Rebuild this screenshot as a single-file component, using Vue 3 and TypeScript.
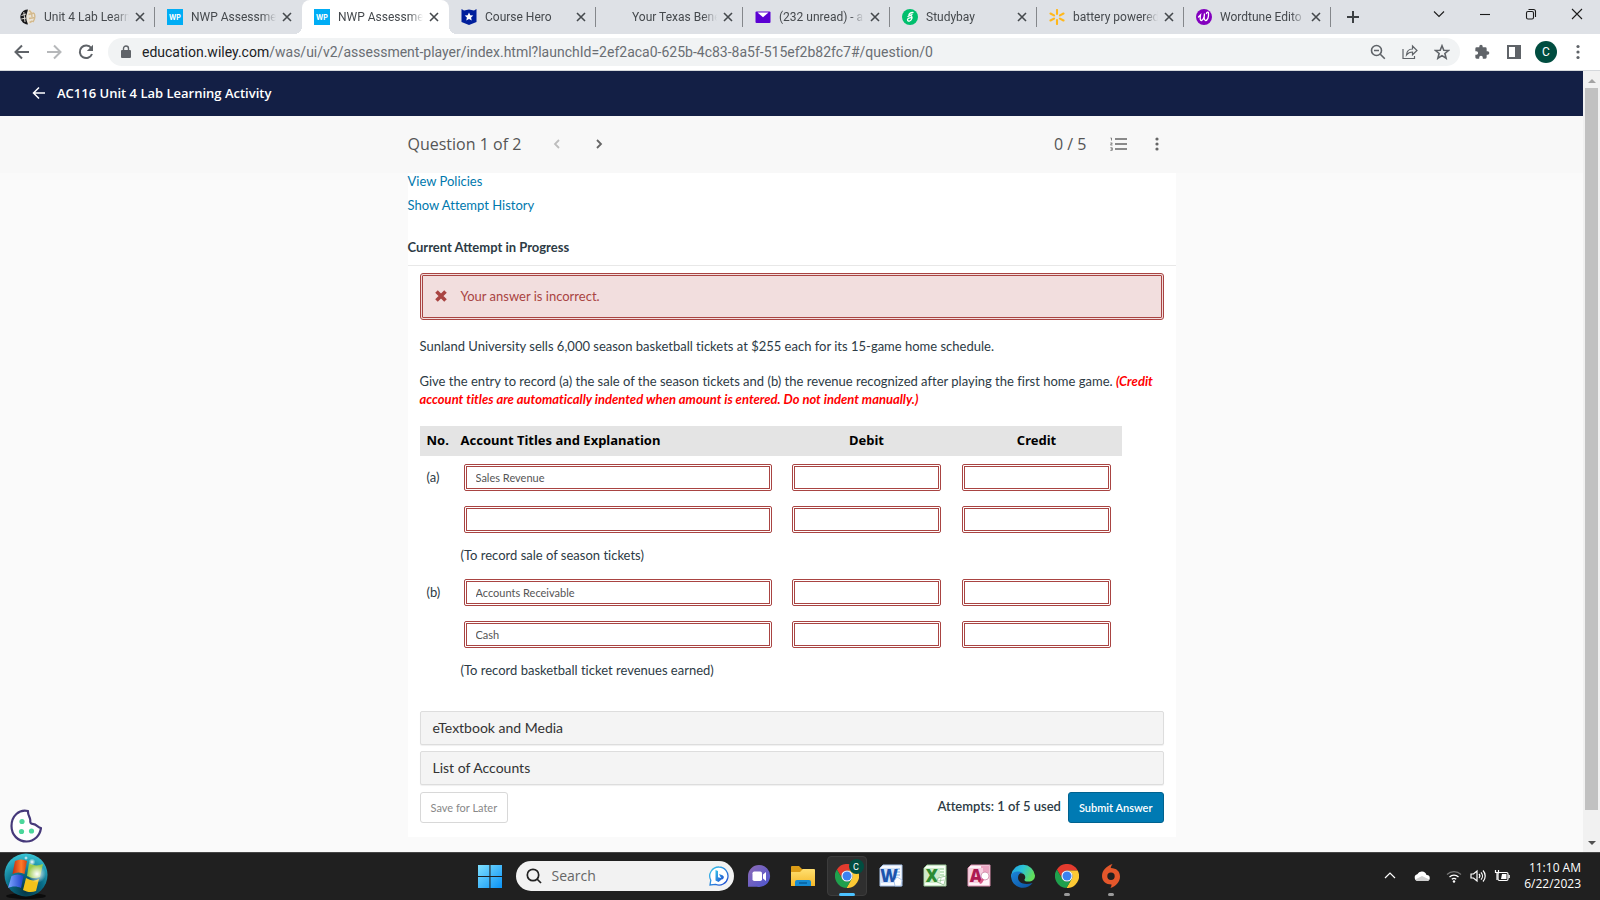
<script setup lang="ts">
import { reactive } from 'vue'

interface Tab {
  title: string
  icon: string
  active?: boolean
  divider?: boolean
}

interface EntryLine {
  id: string
  no?: string
  account?: string
  debit?: string
  credit?: string
  note?: string
}

const tabs: Tab[] = [
  { title: 'Unit 4 Lab Learn', icon: 'globe', divider: true },
  { title: 'NWP Assessme', icon: 'wp' },
  { title: 'NWP Assessme', icon: 'wp', active: true },
  { title: 'Course Hero', icon: 'hero', divider: true },
  { title: 'Your Texas Bene', icon: 'none', divider: true },
  { title: '(232 unread) - a', icon: 'mail', divider: true },
  { title: 'Studybay', icon: 'study', divider: true },
  { title: 'battery powered', icon: 'spark', divider: true },
  { title: 'Wordtune Edito', icon: 'tune', divider: true },
]

const lines = reactive<EntryLine[]>([
  { id: 'a1', no: '(a)', account: 'Sales Revenue', debit: '', credit: '' },
  { id: 'a2', account: '', debit: '', credit: '' },
  { id: 'an', note: '(To record sale of season tickets)' },
  { id: 'b1', no: '(b)', account: 'Accounts Receivable', debit: '', credit: '' },
  { id: 'b2', account: 'Cash', debit: '', credit: '' },
  { id: 'bn', note: '(To record basketball ticket revenues earned)' },
])
</script>

<template>
  <div class="desktop">
    <header class="browser">
      <div class="tabstrip">
        <div v-for="(tab, i) in tabs" :key="i" class="tab" :class="{ active: tab.active, divider: tab.divider }">
          <svg class="favicon" viewBox="0 0 16 16" aria-hidden="true">
            <g v-if="tab.icon === 'globe'">
              <circle cx="8" cy="8" r="7" fill="#ece5d8" />
              <path d="M8 .4A7.6 7.6 0 0 0 3 13.700L6 15.300 8 15.600 6.500 11 6.200 7z" fill="#17171a" />
              <path d="M1.500 6.500 6 5M1.200 10 6.500 9M3.800 3 5 13" stroke="#dedbd4" stroke-width="1" fill="none" />
              <path d="M9 1.500c2 1 3 4 3 6.500M8.500 5.500 14 4M9 9.500l6-1M9.500 13.500l3-1.500M14 4c1 2 1 6-1 9" stroke="#d3b98d" stroke-width="1.400" fill="none" />
            </g>
            <g v-else-if="tab.icon === 'wp'">
              <rect width="16" height="16" fill="#00adf5" />
              <text x="8" y="10.500" text-anchor="middle" class="wp">WP</text>
            </g>
            <g v-else-if="tab.icon === 'hero'">
              <path d="M.500 0 3 1.500 8 .5 13 1.500 15.500 0V13L8 16 .5 13z" fill="#001f9c" />
              <path d="m8 3.500 1.300 2.800 3 .3-2.200 2 .6 3L8 10.100l-2.700 1.500.6-3-2.200-2 3-.3z" fill="#fff" />
            </g>
            <g v-else-if="tab.icon === 'mail'">
              <rect x=".5" y="2.500" width="15" height="11.500" rx="1" fill="#5b00d3" />
              <path d="M2.500 3.500h11L8 8.300z" fill="#fff" />
            </g>
            <g v-else-if="tab.icon === 'study'">
              <circle cx="8" cy="8" r="8" fill="#00bf6d" />
              <path d="M11 3.500C8 3.500 6.500 5 7 6.700c2.500-.7 3.500.8 2.800 3-.7 2.600-4.200 3.300-4.300 1 0-1.500 2-2.200 4.500-2M6 7.500l4-2" fill="none" stroke="#fff" stroke-width="1.300" stroke-linecap="round" />
            </g>
            <g v-else-if="tab.icon === 'spark'" stroke="#ffb81c" stroke-width="2.100" stroke-linecap="round">
              <path d="M8 1v4M8 11v4M1.500 4.500 5 6.400M11 9.600l3.500 1.900M1.500 11.500 5 9.600M11 6.400l3.500-1.900" />
            </g>
            <g v-else-if="tab.icon === 'tune'">
              <circle cx="8" cy="8" r="8" fill="#8300bf" />
              <path d="M2.500 8 4.500 6C4 9 4 11.800 5.500 11.500 7.300 11.200 8.500 7.500 8.500 4.500 8 8 7.800 11.500 9.500 11.500c2.200 0 3.300-3.500 3-7.500-.2-1.500-2-1.200-2 .5" fill="none" stroke="#fff" stroke-width="1.300" stroke-linecap="round" />
            </g>
          </svg>
          <span class="tab-title">{{ tab.title }}</span>
          <button class="tab-close" aria-label="Close tab">
            <svg viewBox="0 0 10 10"><path d="m1 1 8 8M9 1 1 9" /></svg>
          </button>
        </div>
        <button class="new-tab" aria-label="New tab">
          <svg viewBox="0 0 12 12"><path d="M6 0v12M0 6h12" /></svg>
        </button>
        <div class="window-controls">
          <button aria-label="Search tabs"><svg viewBox="0 0 12 12"><path d="m1 3.500 5 5 5-5" /></svg></button>
          <button aria-label="Minimize"><svg viewBox="0 0 12 12"><path d="M1 6.500h10" /></svg></button>
          <button aria-label="Restore"><svg viewBox="0 0 12 12"><rect x="1.500" y="3.500" width="7" height="7.500" rx="1.500" /><path d="M3.500 1.500h5a2 2 0 0 1 2 2v5.500" /></svg></button>
          <button aria-label="Close"><svg viewBox="0 0 12 12"><path d="m1 1 10 10M11 1 1 11" /></svg></button>
        </div>
      </div>

      <div class="toolbar">
        <button class="tool" aria-label="Back"><svg viewBox="0 0 16 16"><path class="line" d="M15 8H2M8 1.500 1.500 8 8 14.500" /></svg></button>
        <button class="tool faded" aria-label="Forward"><svg viewBox="0 0 16 16"><path class="line" d="M1 8h13M8 1.500 14.500 8 8 14.500" /></svg></button>
        <button class="tool" aria-label="Reload"><svg viewBox="0 0 16 16"><path class="line" d="M13.200 4A6.300 6.300 0 1 0 14 10" /><path class="solid" d="M15 .8V7H8.800z" /></svg></button>
        <div class="omnibox">
          <svg class="lock" viewBox="0 0 10 14" aria-hidden="true"><path class="solid" d="M1 5h8a1 1 0 0 1 1 1v6a1 1 0 0 1-1 1H1a1 1 0 0 1-1-1V6a1 1 0 0 1 1-1z" /><path d="M2.500 6V3.500a2.500 2.500 0 0 1 5 0V6" fill="none" stroke="#5f6368" stroke-width="1.400" /></svg>
          <div class="url"><span class="host">education.wiley.com</span>/was/ui/v2/assessment-player/index.html?launchId=2ef2aca0-625b-4c83-8a5f-515ef2b82fc7#/question/0</div>
          <button class="tool" aria-label="Zoom"><svg viewBox="0 0 16 16"><circle class="thin" cx="6.500" cy="6.500" r="5" /><path class="thin" d="m10.300 10.300 4.500 4.500M4 6.500h5" /></svg></button>
          <button class="tool" aria-label="Share"><svg viewBox="0 0 16 16"><path class="hair" d="M1 5v9.500h11.500V12M4.500 11c.3-4 2.500-6 6-6V2l4.500 4.500-4.500 4.300V8c-2.800 0-4.500 1-6 3z" /></svg></button>
          <button class="tool" aria-label="Bookmark this page"><svg viewBox="0 0 16 16"><path class="thin" d="m8 1.800 1.800 4.400 4.700.3-3.600 3 1.200 4.700L8 11.600l-4.100 2.600 1.200-4.700-3.600-3 4.700-.3z" /></svg></button>
        </div>
        <button class="tool" aria-label="Extensions"><svg viewBox="0 0 24 24"><path class="solid" d="M20.500 11H19V7a2 2 0 0 0-2-2h-4V3.500a2.500 2.500 0 0 0-5 0V5H4a2 2 0 0 0-2 2v3.800h1.500a2.700 2.700 0 0 1 0 5.400H2V20a2 2 0 0 0 2 2h3.800v-1.500a2.700 2.700 0 0 1 5.400 0V22H17a2 2 0 0 0 2-2v-4h1.500a2.500 2.500 0 0 0 0-5z" /></svg></button>
        <button class="tool" aria-label="Side panel"><svg viewBox="0 0 16 16"><path class="solid" fill-rule="evenodd" d="M1 1h14v14H1zM3 3v10h6V3z" /></svg></button>
        <button class="tool" aria-label="Profile"><span class="avatar">C</span></button>
        <button class="tool" aria-label="Menu"><svg viewBox="0 0 16 16"><circle class="solid" cx="8" cy="2.500" r="1.600" /><circle class="solid" cx="8" cy="8" r="1.600" /><circle class="solid" cx="8" cy="13.500" r="1.600" /></svg></button>
      </div>
    </header>

    <div class="viewport">
      <div class="page">
        <div class="course-bar">
          <a href="#" class="course-link">
            <svg viewBox="0 0 14 14" aria-hidden="true"><path d="M13 7H1.500M7 1.500 1.500 7 7 12.500" /></svg>
            <span>AC116 Unit 4 Lab Learning Activity</span>
          </a>
        </div>

        <div class="question-bar">
          <div class="column question-row">
            <h1>Question 1 of 2</h1>
            <button class="step prev" aria-label="Previous question"><svg viewBox="0 0 8 10"><path d="M6 1 2 5l4 4" /></svg></button>
            <button class="step" aria-label="Next question"><svg viewBox="0 0 8 10"><path d="m2 1 4 4-4 4" /></svg></button>
            <span class="score">0 / 5</span>
            <button class="step list" aria-label="Question list">
              <svg viewBox="0 0 18 14"><path d="M5 2h12M5 7h12M5 12h12" /><path class="nums" d="M.5 1h1v2.500M.3 6h2L.5 8h2M.3 10.800h2v2.500h-2M1 12h1" /></svg>
            </button>
            <button class="step more" aria-label="More options">
              <svg viewBox="0 0 4 14"><circle cx="2" cy="2" r="1.600" /><circle cx="2" cy="7" r="1.600" /><circle cx="2" cy="12" r="1.600" /></svg>
            </button>
          </div>
        </div>

        <main class="column panel">
          <a href="#" class="text-link">View Policies</a>
          <a href="#" class="text-link">Show Attempt History</a>
          <h2>Current Attempt in Progress</h2>

          <div class="content">
            <div class="alert" role="alert">
              <svg viewBox="0 0 12 12" aria-hidden="true"><path d="m1.500 1.500 9 9M10.500 1.500l-9 9" /></svg>
              <span>Your answer is incorrect.</span>
            </div>

            <p>Sunland University sells 6,000 season basketball tickets at $255 each for its 15-game home schedule.</p>
            <p>
              Give the entry to record (a) the sale of the season tickets and (b) the revenue recognized after playing the first home game.
              <em>(Credit account titles are automatically indented when amount is entered. Do not indent manually.)</em>
            </p>

            <table>
              <colgroup><col class="c-no" /><col /><col class="c-amount" /><col class="c-amount" /></colgroup>
              <thead>
                <tr><th class="no">No.</th><th class="title">Account Titles and Explanation</th><th>Debit</th><th>Credit</th></tr>
              </thead>
              <tbody>
                <tr v-for="line in lines" :key="line.id" :class="{ note: line.note }">
                  <td class="no">{{ line.no }}</td>
                  <td v-if="line.note" colspan="3" class="title">{{ line.note }}</td>
                  <template v-else>
                    <td><input v-model="line.account" type="text" :aria-label="'Account title ' + line.id" /></td>
                    <td class="amount"><input v-model="line.debit" type="text" :aria-label="'Debit ' + line.id" /></td>
                    <td class="amount"><input v-model="line.credit" type="text" :aria-label="'Credit ' + line.id" /></td>
                  </template>
                </tr>
              </tbody>
            </table>

            <button class="accordion">eTextbook and Media</button>
            <button class="accordion">List of Accounts</button>

            <div class="actions">
              <button class="btn save">Save for Later</button>
              <span class="attempts">Attempts: 1 of 5 used</span>
              <button class="btn submit">Submit Answer</button>
            </div>
          </div>
        </main>

        <button class="cookie" aria-label="Cookie settings">
          <svg viewBox="0 0 32 34"><path d="M18 2C9 0 1.500 7 1.500 17c0 9 6.500 15.500 15 15.500 8 0 13.500-6 14.500-13.500-3-.5-4.500-3.500-7.500-3.800-2.500-.2-3.500-1-3.200-3.700.3-3-2.800-5-2.300-9.500z" fill="#fff" stroke="#46397a" stroke-width="2.200" stroke-linejoin="round" /><circle cx="12" cy="12.500" r="2.600" fill="#4bd69b" /><circle cx="11.500" cy="22.500" r="2.600" fill="#4bd69b" /><circle cx="21.500" cy="22" r="2.600" fill="#4bd69b" /></svg>
        </button>
      </div>

      <div class="scrollbar" aria-hidden="true">
        <svg viewBox="0 0 8 4"><path d="M0 4 4 0l4 4z" fill="#a3a3a3" /></svg>
        <div class="thumb"></div>
        <svg viewBox="0 0 8 4"><path d="m0 0 4 4 4-4z" fill="#505050" /></svg>
      </div>
    </div>

    <footer class="taskbar">
      <svg width="0" height="0" class="defs" aria-hidden="true">
        <defs>
          <radialGradient id="orb" cx=".5" cy=".85" r=".9"><stop offset="0" stop-color="#06323f" /><stop offset=".45" stop-color="#086c88" /><stop offset="1" stop-color="#3fd0df" /></radialGradient>
          <radialGradient id="shine"><stop offset="0" stop-color="#fff" /><stop offset="1" stop-color="#fff" stop-opacity="0" /></radialGradient>
          <linearGradient id="win" x1="0" y1="0" x2="1" y2="1"><stop offset="0" stop-color="#7fe0ff" /><stop offset="1" stop-color="#0a92f5" /></linearGradient>
          <linearGradient id="chat" x1="0" y1="0" x2="1" y2="1"><stop offset="0" stop-color="#8f6bb5" /><stop offset="1" stop-color="#4b55d0" /></linearGradient>
          <linearGradient id="bing" x1="0" y1="0" x2="1" y2="1"><stop offset="0" stop-color="#35c6ea" /><stop offset="1" stop-color="#2146cf" /></linearGradient>
          <linearGradient id="folder" x1="0" y1="0" x2="0" y2="1"><stop offset="0" stop-color="#ffdf70" /><stop offset="1" stop-color="#f5b829" /></linearGradient>
          <linearGradient id="edge" x1="0" y1="0" x2="1" y2=".4"><stop offset="0" stop-color="#1f9de6" /><stop offset=".5" stop-color="#2cc3d5" /><stop offset="1" stop-color="#61de5c" /></linearGradient>
          <linearGradient id="edge-low" x1="0" y1="0" x2="1" y2="1"><stop offset="0" stop-color="#1c86d9" /><stop offset="1" stop-color="#0b4f9e" /></linearGradient>
          <linearGradient id="red-flag"><stop offset="0" stop-color="#c22d0e" /><stop offset=".6" stop-color="#ff7b2a" /><stop offset="1" stop-color="#d3420f" /></linearGradient>
          <linearGradient id="blue-flag"><stop offset="0" stop-color="#7da6ff" /><stop offset="1" stop-color="#1b3fc9" /></linearGradient>
          <symbol id="chrome" viewBox="0 0 24 24">
            <path d="M12 6.500h10.700A12 12 0 0 0 1.900 5.500l5.300 9.300A5.500 5.500 0 0 1 12 6.500z" fill="#e33b2e" />
            <path d="M12 6.500h10.700A12 12 0 0 0 1.900 5.500l5.300 9.300A5.500 5.500 0 0 1 12 6.500z" fill="#fcc934" transform="rotate(120 12 12)" />
            <path d="M12 6.500h10.700A12 12 0 0 0 1.900 5.500l5.300 9.300A5.500 5.500 0 0 1 12 6.500z" fill="#1fa04d" transform="rotate(240 12 12)" />
            <circle cx="12" cy="12" r="5.600" fill="#fff" /><circle cx="12" cy="12" r="4.500" fill="#3b82f0" />
          </symbol>
        </defs>
      </svg>

      <button class="orb" aria-label="Widgets">
        <svg viewBox="0 0 44 46">
          <ellipse cx="22" cy="43" rx="20" ry="3" fill="#0c0c0c" />
          <circle cx="22" cy="22" r="21.500" fill="url(#orb)" />
          <path d="M11 8c4-2 8-2 12 0l-2.500 13c-4-2-8-2-12 0z" fill="url(#red-flag)" />
          <path d="M25 10c5 3 9 3 14 1l-3 13c-5 2-9 1-13-1z" fill="#9bcb4d" />
          <path d="M7.500 23c4-2 8-2 12 0L17 35c-4-2-9-2-13 0z" fill="url(#blue-flag)" />
          <path d="M22 25c5 3 9 3 13 1l-3 12c-5 2-9 1-13-1z" fill="#f2c21b" />
          <circle cx="33" cy="21" r="9" fill="url(#shine)" /><circle cx="28" cy="9" r="3.500" fill="url(#shine)" /><circle cx="22" cy="5" r="2" fill="url(#shine)" />
        </svg>
      </button>

      <nav class="apps" aria-label="Taskbar">
        <button class="app" aria-label="Start"><svg viewBox="0 0 24 24"><path d="M0 1h11.400v11H0zM12.500 1H24v11H12.500zM0 13h11.400v11H0zM12.500 13H24v11H12.500z" fill="url(#win)" /></svg></button>
        <label class="search">
          <svg class="glass" viewBox="0 0 16 16" aria-hidden="true"><circle cx="7" cy="7" r="5.700" /><path d="m11 11 4 4" /></svg>
          <input type="search" placeholder="Search" aria-label="Search" />
          <svg class="bing" viewBox="0 0 20 20" aria-hidden="true"><path d="M10 1a9 9 0 1 1-3.500 17.300L1 19l.8-4.800A9 9 0 0 1 10 1z" fill="#fff" stroke="url(#bing)" stroke-width="1.300" /><path d="m6.500 4 2.500.9v6.300l4.800 1.300L9.500 16 6.500 14.500zM10 8l3.500 1.300c2 1 1.800 3-.2 4.200L11.500 11z" fill="url(#bing)" /></svg>
        </label>
        <button class="app" aria-label="Chat"><svg viewBox="0 0 24 24"><path d="M12 1a11 11 0 1 1-2 21.800H1V12A11 11 0 0 1 12 1z" fill="url(#chat)" /><rect x="5.500" y="7.500" width="9.500" height="9.500" rx="1.800" fill="#fff" /><path d="m16 10.500 3-2.500v9l-3-2.500z" fill="#fff" /></svg></button>
        <button class="app" aria-label="File Explorer"><svg viewBox="0 0 24 24"><path d="M0 3a1 1 0 0 1 1-1h7l3 3h12v4H0z" fill="#dc9c16" /><path d="M0 8h9l3-3h11a1 1 0 0 1 1 1v16H0z" fill="url(#folder)" /><path d="M4 22v-4a2 2 0 0 1 2-2h12a2 2 0 0 1 2 2v4z" fill="#168bd3" /><path d="M8 19h8" stroke="#075f9e" stroke-width="1.500" /></svg></button>
        <button class="app current" aria-label="Chrome, profile C"><svg viewBox="0 0 24 24"><use href="#chrome" /></svg><span class="badge">C</span></button>
        <button class="app" aria-label="Word"><svg viewBox="0 0 24 24"><path d="M4 1h19v21H1V4z" fill="#f8faff" stroke="#a9c4ea" /><path d="M17 5h4M17 8h4M17 11h4" stroke="#7ea6df" /><path d="M2 4h15v15H2z" fill="#d3e3fa" /><text x="10" y="18" text-anchor="middle" class="office" fill="#1c54ad">W</text><path d="m15 17 3-4 5 3-1 6h-6z" fill="#fff" stroke="#9fbce6" stroke-width=".8" /></svg></button>
        <button class="app" aria-label="Excel"><svg viewBox="0 0 24 24"><path d="M4 1h19v21H1V4z" fill="#f6fff4" stroke="#9cc99a" /><path d="M17 5h4M17 8h4M17 11h4" stroke="#8cc78c" /><path d="M2 4h15v15H2z" fill="#cfeaca" /><text x="9" y="18" text-anchor="middle" class="office" fill="#2c8b32">X</text><path d="m15 14 8-2-2 9-7-3z" fill="#fff" stroke="#86bd85" stroke-width=".8" /><path d="m15 17 6-1M18 14l-1 5" stroke="#86bd85" stroke-width=".6" /></svg></button>
        <button class="app" aria-label="Access"><svg viewBox="0 0 24 24"><path d="M4 1h19v21H1V4z" fill="#fff3f8" stroke="#db8eae" /><path d="M14 2h8v7h-8z" fill="#eba5c2" /><path d="M2 4h14v15H2z" fill="#f6cfdf" /><text x="9" y="18" text-anchor="middle" class="office" fill="#ad1a52">A</text><circle cx="18" cy="12" r="4" fill="#fff" stroke="#c6779a" stroke-width=".7" /><path d="m15 14-3 5 2 1 3-4z" fill="#d65786" /></svg></button>
        <button class="app" aria-label="Edge"><svg viewBox="0 0 24 24"><path d="M.2 11A12 12 0 0 1 24 11.500c0 4-3 6-6.500 6-3 0-4.500-1-4-2 1.500-1.800 1-5.500-3-6.300C6 8.300 2 10 .2 14z" fill="url(#edge)" /><path d="M.2 11.500C1 7.500 8 6 12 9c-3-.5-5 1.500-5 4.800 0 4.700 6 8 14.500 5.200C18 24 10.500 25.500 5 21.500 1.500 19 0 15.500.2 11.500z" fill="url(#edge-low)" /></svg></button>
        <button class="app open" aria-label="Chrome"><svg viewBox="0 0 24 24"><use href="#chrome" /></svg></button>
        <button class="app open" aria-label="Origin"><svg viewBox="0 0 24 24"><path fill-rule="evenodd" d="M13.500 0c-1 1.300-1.600 2.700-1.800 4C17.500 4 21 7.500 21 12.500c0 5.500-4 9.500-9.500 11.500.8-1.300 1-2.500 1-3.500C7 20.500 3 17 3 12 3 6.500 7.500 2 13.500 0zM12 8.500a3.700 3.700 0 1 0 0 7.400 3.700 3.700 0 0 0 0-7.400z" fill="#e4572b" /></svg></button>
      </nav>

      <div class="tray">
        <button aria-label="Show hidden icons"><svg viewBox="0 0 16 16"><path class="w" d="m3 10 5-5 5 5" /></svg></button>
        <button aria-label="OneDrive"><svg viewBox="0 0 16 16"><path class="f" d="M4 13a3.400 3.400 0 0 1-.7-6.700A5 5 0 0 1 12.500 7a3 3 0 0 1 .5 6z" /><path d="M4 13a3.400 3.400 0 0 1-2.800-1.500L8 8l7.300 3.500A3 3 0 0 1 13 13z" fill="#cfcfcf" /></svg></button>
        <div class="status">
          <svg viewBox="0 0 16 16"><path class="d" d="M1 6.500a10 10 0 0 1 14 0" /><path class="w" d="M3.500 9a6.400 6.400 0 0 1 9 0M5.800 11.300a3.200 3.200 0 0 1 4.400 0" /><circle class="f" cx="8" cy="13.500" r="1.200" /></svg>
          <svg viewBox="0 0 16 16"><path class="w" d="M1 6h2.500L7 3v10l-3.500-3H1z" /><path class="w" d="M9 6a3 3 0 0 1 0 4M11 4.300a5.500 5.500 0 0 1 0 7.400M13 2.500a8 8 0 0 1 0 11" /></svg>
          <svg viewBox="0 0 16 16"><rect class="w" x="4" y="4.500" width="10" height="8" rx="1.500" /><path class="f" d="M8 6h4.500v5H7zM14.500 7h1.300v3h-1.300z" /><path class="w" d="M1.500 2v2.500h3V2M3 4.500V12" /></svg>
        </div>
        <div class="clock"><span>11:10 AM</span><span>6/22/2023</span></div>
      </div>
    </footer>
  </div>
</template>

<style>
html,
body {
  margin: 0;
  background: #fafafa;
}
</style>

<style scoped>
* {
  box-sizing: border-box;
}

button {
  margin: 0;
  padding: 0;
  border: 0;
  background: none;
  font: inherit;
  color: inherit;
  cursor: pointer;
}

a {
  text-decoration: none;
}

svg {
  display: block;
  flex: none;
}

.desktop {
  display: flex;
  flex-direction: column;
  min-height: 100vh;
  font-family: Lato, "Open Sans", sans-serif;
  font-size: 13px;
  line-height: 18px;
  color: #2d3b45;
}

/* Browser chrome */
.browser {
  font-family: Roboto, "Open Sans", sans-serif;
  border-bottom: 1px solid #d5d8dc;
}

.tabstrip {
  display: flex;
  align-items: center;
  height: 34px;
  padding-left: 8px;
  background: #dee1e6;
}

.tab {
  position: relative;
  display: flex;
  align-items: center;
  flex: 0 1 147px;
  min-width: 0;
  height: 34px;
  padding: 0 8px 0 12px;
  color: #45494d;
  font-size: 12px;
}

.tab.divider::after {
  content: "";
  position: absolute;
  right: 0;
  top: 7px;
  width: 1px;
  height: 20px;
  background: #84878b;
}

.tab.active {
  background: #fff;
  border-radius: 8px 8px 0 0;
}

.tab.active::before,
.tab.active::after {
  content: "";
  position: absolute;
  bottom: 0;
  width: 8px;
  height: 8px;
}

.tab.active::before {
  right: 100%;
  background: radial-gradient(circle at 0 0, transparent 8px, #fff 8px);
}

.tab.active::after {
  left: 100%;
  background: radial-gradient(circle at 100% 0, transparent 8px, #fff 8px);
}

.favicon {
  width: 16px;
  height: 16px;
  margin-right: 8px;
}

.wp {
  font: 700 7px Inter, sans-serif;
  fill: #fff;
}

.tab-title {
  flex: 1;
  overflow: hidden;
  white-space: nowrap;
  mask-image: linear-gradient(to right, #000 calc(100% - 14px), transparent);
}

.tab-close {
  display: grid;
  place-items: center;
  flex: none;
  width: 14px;
  height: 16px;
  margin-left: 4px;
}

.tab-close svg {
  width: 10px;
  height: 10px;
  stroke: #45494d;
  stroke-width: 1.600;
}

.new-tab {
  display: grid;
  place-items: center;
  width: 28px;
  height: 28px;
  margin-left: 8px;
}

.new-tab svg {
  width: 12px;
  height: 12px;
  stroke: #3c4043;
  stroke-width: 2;
}

.window-controls {
  display: flex;
  align-self: flex-start;
  margin-left: auto;
}

.window-controls button {
  display: grid;
  place-items: center;
  width: 46px;
  height: 28px;
}

.window-controls svg {
  width: 12px;
  height: 12px;
  fill: none;
  stroke: #1b1b1b;
  stroke-width: 1.100;
}

.toolbar {
  display: flex;
  align-items: center;
  height: 36px;
  padding: 0 6px;
  background: #fff;
}

.tool {
  display: grid;
  place-items: center;
  flex: none;
  width: 32px;
  height: 28px;
}

.tool svg {
  width: 16px;
  height: 16px;
}

.solid {
  fill: #5f6368;
}

.line,
.thin,
.hair {
  fill: none;
  stroke: #5f6368;
  stroke-width: 2;
}

.thin {
  stroke-width: 1.600;
}

.hair {
  stroke-width: 1.200;
}

.faded {
  opacity: 0.45;
}

.omnibox {
  display: flex;
  align-items: center;
  flex: 1;
  min-width: 0;
  height: 28px;
  margin: 0 6px;
  padding: 0 2px 0 13px;
  border-radius: 14px;
  background: #f1f3f4;
}

.lock {
  width: 10px;
  height: 14px;
  margin-right: 11px;
}

.url {
  flex: 1;
  overflow: hidden;
  white-space: nowrap;
  font-size: 14px;
  color: #6a6e73;
}

.host {
  color: #202124;
}

.avatar {
  display: grid;
  place-items: center;
  width: 22px;
  height: 22px;
  border-radius: 50%;
  background: #004d40;
  color: #fff;
  font-size: 12px;
}

/* Web page */
.viewport {
  display: flex;
  flex: 1;
}

.page {
  position: relative;
  flex: 1;
  min-width: 0;
  padding-bottom: 15px;
  background: #fafafa;
}

.course-bar {
  display: flex;
  align-items: center;
  height: 45px;
  padding: 0 32px 2px;
  background: #131f45;
}

.course-link {
  display: flex;
  align-items: center;
  gap: 11px;
  font: 600 13px/18px "Open Sans", "Noto Sans", sans-serif;
  color: #fff;
}

.course-link svg {
  width: 14px;
  height: 14px;
  fill: none;
  stroke: #fff;
  stroke-width: 1.500;
}

.column {
  width: 100%;
  max-width: 768px;
  margin: 0 auto;
}

.question-bar {
  background: #f8f8f8;
}

.question-row {
  display: flex;
  align-items: center;
  height: 57px;
  padding-bottom: 2px;
  font: 16px/24px "Open Sans", "Noto Sans", sans-serif;
  color: #555;
}

h1 {
  margin: 0 24px 0 0;
  font: inherit;
}

.step {
  display: grid;
  place-items: center;
  width: 24px;
  height: 24px;
}

.step svg {
  width: 8px;
  height: 10px;
  fill: none;
  stroke: #666;
  stroke-width: 1.800;
}

.prev {
  margin-right: 18px;
}

.prev svg {
  stroke: #bdbdbd;
}

.score {
  margin-left: auto;
}

.list {
  margin: 0 14px 0 20px;
}

.list svg {
  width: 18px;
  height: 14px;
  stroke-width: 1.400;
}

.list .nums {
  stroke-width: 0.800;
}

.more {
  margin-right: 7px;
}

.more svg {
  width: 4px;
  height: 14px;
  fill: #666;
  stroke: none;
}

.panel {
  display: flex;
  flex-direction: column;
  align-items: flex-start;
  background: #fff;
  font-variant-ligatures: no-common-ligatures;
}

.text-link {
  margin-bottom: 8px;
  line-height: 16px;
  color: #0078ad;
}

h2 {
  width: 100%;
  margin: 17px 0 0;
  padding-bottom: 9px;
  border-bottom: 1px solid #e8e8e8;
  font: 700 13px/18px Lato, sans-serif;
}

.content {
  align-self: stretch;
  padding: 7px 12px 14px;
}

.alert {
  display: flex;
  align-items: center;
  gap: 14px;
  height: 47px;
  margin-bottom: 17px;
  padding: 0 12px 2px;
  border: 3px double #a94442;
  border-radius: 3px;
  background: #f2dede;
  color: #a94442;
}

.alert svg {
  width: 12px;
  height: 12px;
  fill: none;
  stroke: #a94442;
  stroke-width: 3.600;
}

p {
  margin: 0 0 17px;
}

em {
  font-weight: 700;
  color: #f00;
}

table {
  width: 702px;
  max-width: 100%;
  margin: 18px 0 25px;
  border-collapse: collapse;
  table-layout: fixed;
}

.c-no {
  width: 34px;
}

.c-amount {
  width: 170px;
}

th {
  height: 30px;
  padding: 0 0 2px;
  background: #e4e4e4;
  font: 700 13px/18px "Noto Sans", "DejaVu Sans", sans-serif;
  color: #000;
}

td {
  height: 42px;
  padding: 0 10px;
}

td.amount {
  padding-right: 11px;
}

.note td {
  height: 31px;
}

.no,
.title {
  text-align: left;
  white-space: nowrap;
}

th.no,
td.no {
  padding-left: 7px;
  padding-right: 0;
}

th.title,
td.title {
  padding: 0 0 2px 7px;
}

td input {
  display: block;
  width: 100%;
  height: 27px;
  padding: 0 9px;
  border: 3px double #a94442;
  border-radius: 2px;
  background: #fff;
  font: 11px/18px Lato, sans-serif;
  color: #555;
}

.accordion {
  display: block;
  width: 100%;
  height: 34px;
  margin-bottom: 6px;
  padding: 0 12px;
  border: 1px solid #ddd;
  border-radius: 2px;
  background: #f4f4f4;
  box-shadow: 0 1px 1px #00000010;
  font-size: 14px;
  text-align: left;
  color: #333;
}

.actions {
  display: flex;
  align-items: center;
  padding-top: 1px;
}

.btn {
  height: 31px;
  padding: 0 10px;
  border: 1px solid #d8d8d8;
  border-radius: 3px;
  background: #fff;
  font-size: 11px;
  color: #888;
}

.attempts {
  margin: 0 7px 0 auto;
  padding-bottom: 4px;
  font-weight: 600;
}

.submit {
  border-color: #00628f;
  background: #007ab3;
  font-weight: 600;
  color: #fff;
}

.cookie {
  position: absolute;
  left: 10px;
  bottom: 9px;
}

.cookie svg {
  width: 32px;
  height: 34px;
}

.scrollbar {
  display: flex;
  flex-direction: column;
  align-items: center;
  width: 17px;
  padding: 8px 0 7px;
  background: #f1f1f1;
}

.scrollbar svg {
  width: 8px;
  height: 4px;
}

.thumb {
  width: 13px;
  flex: 1;
  margin: 5px 0 31px;
  background: #c1c1c1;
}

/* Taskbar */
.taskbar {
  display: grid;
  grid-template-columns: 1fr auto 1fr;
  align-items: center;
  height: 48px;
  padding-bottom: 2px;
  border-top: 1px solid #454545;
  background: #202020;
  font-family: "Open Sans", "Noto Sans", sans-serif;
  color: #fff;
}

.defs {
  position: absolute;
}

.orb {
  justify-self: start;
  margin-left: 4px;
}

.orb svg {
  width: 44px;
  height: 46px;
}

.apps {
  display: flex;
  align-items: center;
}

.app {
  position: relative;
  display: grid;
  place-items: center;
  width: 44px;
  height: 40px;
}

.app svg {
  width: 24px;
  height: 24px;
}

.office {
  font: 800 17px "Open Sans", sans-serif;
}

.current::before {
  content: "";
  position: absolute;
  inset: 0 2px;
  border: 1px solid #3c3c3c;
  border-radius: 4px;
  background: #2f2f2f;
}

.current svg {
  position: relative;
}

.current::after,
.open::after {
  content: "";
  position: absolute;
  bottom: 0;
  width: 6px;
  height: 3px;
  border-radius: 2px;
  background: #9a9a9a;
}

.current::after {
  width: 16px;
  background: #4cc2ff;
}

.badge {
  position: absolute;
  top: 3px;
  right: 5px;
  display: grid;
  place-items: center;
  width: 15px;
  height: 15px;
  border-radius: 50%;
  background: #004d40;
  font: 9px Roboto, sans-serif;
}

.search {
  display: flex;
  align-items: center;
  width: 218px;
  height: 30px;
  margin: 0 3px 0 4px;
  padding: 0 5px 0 10px;
  border-radius: 15px;
  background: #f2f2f2;
}

.search input {
  flex: 1;
  min-width: 0;
  padding: 0 0 0 10px;
  border: 0;
  outline: 0;
  background: none;
  font: 14px/20px "Open Sans", "Noto Sans", sans-serif;
  color: #333;
}

.search input::placeholder {
  color: #666;
}

.glass {
  width: 16px;
  height: 16px;
  fill: none;
  stroke: #222;
  stroke-width: 1.700;
}

.bing {
  width: 20px;
  height: 20px;
}

.tray {
  display: flex;
  align-items: center;
  justify-self: end;
  padding-right: 19px;
}

.tray svg {
  width: 16px;
  height: 16px;
}

.tray button {
  display: grid;
  place-items: center;
  width: 32px;
}

.status {
  display: flex;
  gap: 8px;
  margin-left: 8px;
}

.w,
.d {
  fill: none;
  stroke: #fff;
  stroke-width: 1.200;
}

.d {
  stroke: #777;
}

.f {
  fill: #fff;
}

.clock {
  display: flex;
  flex-direction: column;
  margin-left: 14px;
  font-size: 12px;
  line-height: 16px;
  text-align: right;
}
</style>
